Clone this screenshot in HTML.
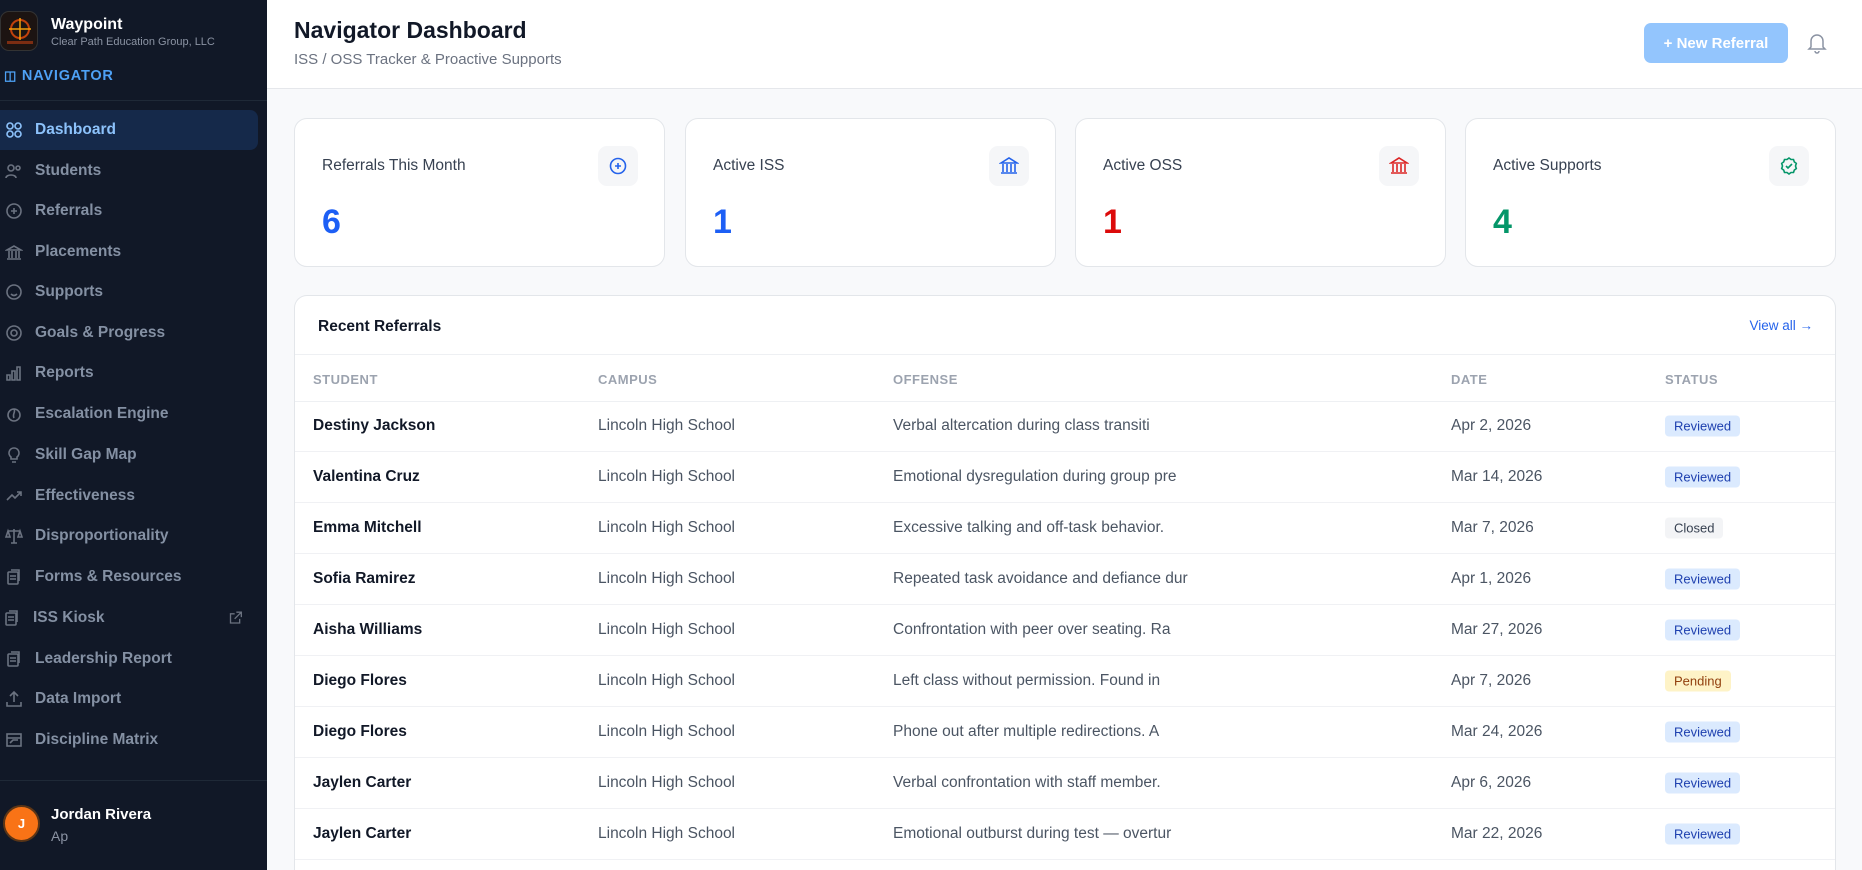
<!DOCTYPE html>
<html><head><meta charset="utf-8"><style>
*{box-sizing:border-box;margin:0;padding:0}
html,body{width:1862px;height:870px;overflow:hidden}
body{font-family:"Liberation Sans",sans-serif;background:#f8f9fb}
#wrap{position:relative;width:1862px;height:870px;overflow:hidden;background:#f8f9fb}
.sb{position:absolute;left:0;top:0;width:267px;height:870px;background:#111827}
.logo{position:absolute;left:0;top:11px;width:38px;height:40px;border-radius:9px;background:#1c1412;border:1px solid #333}
.brand{position:absolute;left:51px;top:16px;color:#fff;font-weight:700;font-size:16px}
.sub{position:absolute;left:51px;top:36px;color:#8b93a3;font-size:11px}
.navh{position:absolute;left:4px;top:68px;color:#4ea1f5;font-weight:700;font-size:14.5px;letter-spacing:.8px}
.div{position:absolute;left:0;width:267px;height:1px;background:#1f2937}
.item{position:absolute;left:0;width:258px;height:40px;display:flex;align-items:center;color:#8490a3;font-size:15.5px;font-weight:600}
.item svg{position:absolute;left:5px;width:18px;height:18px;stroke:#6b7280;fill:none;stroke-width:1.6}
.item span{position:absolute;left:35px}
.item.act{background:#15294a;border-radius:0 8px 8px 0;color:#8cc2fb}
.item.act svg{stroke:#8cc2fb}
.av{position:absolute;left:3px;top:805px;width:37px;height:37px;border-radius:50%;background:#f97316;border:2px solid #5b3516;color:#fff;font-weight:700;font-size:13px;display:flex;align-items:center;justify-content:center}
.hd{position:absolute;left:267px;top:0;width:1595px;height:89px;background:#fff;border-bottom:1px solid #e5e7eb}
.t1{position:absolute;left:27px;top:17px;font-size:23px;font-weight:600;color:#111827}
.t2{position:absolute;left:27px;top:51px;font-size:15px;color:#6b7280}
.btn{position:absolute;left:1377px;top:23px;width:144px;height:40px;border-radius:7px;background:#93c5fd;color:#fff;font-weight:700;font-size:15px;display:flex;align-items:center;justify-content:center}
.card{position:absolute;top:118px;width:371px;height:149px;background:#fff;border:1px solid #e3e6ea;border-radius:13px}
.card .l{position:absolute;left:27px;top:38px;font-size:15.5px;color:#374151}
.card .n{position:absolute;left:27px;top:84px;font-size:34px;font-weight:700}
.card .ib{position:absolute;left:303px;top:27px;width:40px;height:40px;border-radius:9px;background:#f5f6f8;display:flex;align-items:center;justify-content:center}
.card svg{width:20px;height:20px;fill:none;stroke-width:1.6}
.tb{position:absolute;left:294px;top:295px;width:1542px;height:575px;background:#fff;border:1px solid #e3e6ea;border-bottom:none;border-radius:13px 13px 0 0;overflow:hidden}
.th{position:absolute;left:23px;top:22px;font-size:15.5px;font-weight:600;color:#111827}
.va{position:absolute;right:22px;top:22px;font-size:13.5px;color:#2563eb}
.hl{position:absolute;left:0;right:0;height:1px;background:#eef0f3}
.ch{position:absolute;top:76px;font-size:13px;font-weight:600;color:#9ca3af;letter-spacing:.5px}
.row{position:absolute;left:0;right:0;height:51px;border-bottom:1px solid #f0f1f4;font-size:15.5px;color:#4b5563}
.row div{position:absolute;top:50%;transform:translateY(-50%);white-space:nowrap}
.c1{left:18px;color:#111827;font-weight:700}.c2{left:303px}.c3{left:598px}.c4{left:1156px}
.bd{left:1370px;padding:3px 9px;border-radius:4px;font-size:13px}
.rv{background:#dbeafe;color:#1e40af}.cl{background:#f3f4f6;color:#374151}.pd{background:#fef3c7;color:#92400e}
</style></head><body><div id="wrap">
<div class="sb">
<div class="logo"><svg width="38" height="40" viewBox="0 0 38 40"><circle cx="19" cy="17" r="9" fill="none" stroke="#c2410c" stroke-width="2"/><path d="M19 6v22M8 17h22" stroke="#f59e0b" stroke-width="1.5"/><rect x="6" y="29" width="26" height="3" fill="#7c2d12"/></svg></div>
<div class="brand">Waypoint</div><div class="sub">Clear Path Education Group, LLC</div>
<div class="navh"><span style="font-size:13px">◫</span> NAVIGATOR</div>
<div class="div" style="top:100px"></div>
<div class="item act" style="top:110px"><svg viewBox="0 0 18 18"><circle cx="5" cy="5" r="3"/><circle cx="13" cy="5" r="3"/><circle cx="5" cy="13" r="3"/><circle cx="13" cy="13" r="3"/></svg><span>Dashboard</span></div>
<div class="item" style="top:151px"><svg viewBox="0 0 18 18"><circle cx="6" cy="6" r="3"/><path d="M1 16c0-4 10-4 10 0"/><circle cx="13" cy="6" r="2"/></svg><span>Students</span></div>
<div class="item" style="top:191px"><svg viewBox="0 0 18 18"><circle cx="9" cy="9" r="7"/><path d="M9 6v6M6 9h6"/></svg><span>Referrals</span></div>
<div class="item" style="top:232px"><svg viewBox="0 0 18 18"><path d="M2 7l7-4 7 4zM4 8v7M7 8v7M11 8v7M14 8v7M2 16h14"/></svg><span>Placements</span></div>
<div class="item" style="top:272px"><svg viewBox="0 0 18 18"><circle cx="9" cy="9" r="7"/><path d="M6 11c2 2 4 2 6 0"/></svg><span>Supports</span></div>
<div class="item" style="top:313px"><svg viewBox="0 0 18 18"><circle cx="9" cy="9" r="7"/><circle cx="9" cy="9" r="3"/></svg><span>Goals &amp; Progress</span></div>
<div class="item" style="top:353px"><svg viewBox="0 0 18 18"><path d="M2 16V11h3v5zM7 16V7h3v9zM12 16V3h3v13z"/></svg><span>Reports</span></div>
<div class="item" style="top:394px"><svg viewBox="0 0 18 18"><circle cx="9" cy="10" r="6"/><path d="M9 4c2 3-2 5 0 9"/></svg><span>Escalation Engine</span></div>
<div class="item" style="top:435px"><svg viewBox="0 0 18 18"><path d="M9 2a5 5 0 0 1 3 9v2H6v-2a5 5 0 0 1 3-9zM7 16h4"/></svg><span>Skill Gap Map</span></div>
<div class="item" style="top:476px"><svg viewBox="0 0 18 18"><path d="M2 13l5-5 3 3 6-6M12 5h4v4"/></svg><span>Effectiveness</span></div>
<div class="item" style="top:516px"><svg viewBox="0 0 18 18"><path d="M9 2v14M3 4h12M3 4l-2 6h4zM15 4l-2 6h4zM6 16h6"/></svg><span>Disproportionality</span></div>
<div class="item" style="top:557px"><svg viewBox="0 0 18 18"><rect x="3" y="4" width="10" height="12" rx="1"/><path d="M6 2h8v11M5 8h6M5 11h6"/></svg><span>Forms &amp; Resources</span></div>
<div class="item" style="top:598px"><svg viewBox="0 0 18 18" style="left:3px"><rect x="3" y="4" width="10" height="12" rx="1"/><path d="M6 2h8v11M5 8h6M5 11h6"/></svg><span style="left:33px">ISS Kiosk</span><svg viewBox="0 0 18 18" style="left:228px;width:15px"><path d="M8 4H3v11h11v-5M10 2h6v6M16 2L8 10"/></svg></div>
<div class="item" style="top:639px"><svg viewBox="0 0 18 18"><rect x="3" y="4" width="10" height="12" rx="1"/><path d="M6 2h8v11M5 8h6M5 11h6"/></svg><span>Leadership Report</span></div>
<div class="item" style="top:679px"><svg viewBox="0 0 18 18"><path d="M9 12V2M5 6l4-4 4 4M2 12v4h14v-4"/></svg><span>Data Import</span></div>
<div class="item" style="top:720px"><svg viewBox="0 0 18 18"><rect x="2" y="3" width="14" height="12"/><path d="M2 7h14M5 12l3-3h5"/></svg><span>Discipline Matrix</span></div>
<div class="div" style="top:780px"></div>
<div class="av">J</div>
<div style="position:absolute;left:51px;top:806px;color:#fff;font-weight:700;font-size:15px">Jordan Rivera</div>
<div style="position:absolute;left:51px;top:828px;color:#8b93a3;font-size:14px">Ap</div>
</div>
<div class="hd"><div class="t1">Navigator Dashboard</div><div class="t2">ISS / OSS Tracker &amp; Proactive Supports</div>
<div class="btn">+ New Referral</div>
<svg style="position:absolute;left:1540px;top:32px" width="20" height="22" viewBox="0 0 20 22" fill="none" stroke="#8b93a3" stroke-width="1.5"><path d="M4 15V9a6 6 0 0 1 12 0v6l2 2H2zM8 19a2 2 0 0 0 4 0"/></svg></div>
<div class="card" style="left:294px"><div class="l">Referrals This Month</div><div class="n" style="color:#1d5ff5">6</div><div class="ib"><svg viewBox="0 0 20 20" stroke="#2563eb"><circle cx="10" cy="10" r="7.5"/><path d="M10 7v6M7 10h6"/></svg></div></div>
<div class="card" style="left:685px"><div class="l">Active ISS</div><div class="n" style="color:#1d5ff5">1</div><div class="ib"><svg viewBox="0 0 20 20" stroke="#2563eb"><path d="M2 7l8-5 8 5zM4 8v8M8 8v8M12 8v8M16 8v8M2 17h16"/></svg></div></div>
<div class="card" style="left:1075px"><div class="l">Active OSS</div><div class="n" style="color:#dc0a0a">1</div><div class="ib"><svg viewBox="0 0 20 20" stroke="#dc2626"><path d="M2 7l8-5 8 5zM4 8v8M8 8v8M12 8v8M16 8v8M2 17h16"/></svg></div></div>
<div class="card" style="left:1465px"><div class="l">Active Supports</div><div class="n" style="color:#059669">4</div><div class="ib"><svg viewBox="0 0 20 20" stroke="#059669"><path d="M10 2l2 1.5 2.5 0 .8 2.4 2 1.5-.8 2.6.8 2.6-2 1.5-.8 2.4-2.5 0L10 18l-2-1.5-2.5 0-.8-2.4-2-1.5.8-2.6-.8-2.6 2-1.5.8-2.4 2.5 0z"/><path d="M7 10l2 2 4-4"/></svg></div></div>
<div class="tb">
<div class="th">Recent Referrals</div><div class="va">View all →</div>
<div class="hl" style="top:58px"></div>
<div class="ch" style="left:18px">STUDENT</div><div class="ch" style="left:303px">CAMPUS</div><div class="ch" style="left:598px">OFFENSE</div><div class="ch" style="left:1156px">DATE</div><div class="ch" style="left:1370px">STATUS</div>
<div class="hl" style="top:105px"></div>
<div class="row" style="top:105px"><div class="c1">Destiny Jackson</div><div class="c2">Lincoln High School</div><div class="c3">Verbal altercation during class transiti</div><div class="c4">Apr 2, 2026</div><div class="bd rv">Reviewed</div></div>
<div class="row" style="top:156px"><div class="c1">Valentina Cruz</div><div class="c2">Lincoln High School</div><div class="c3">Emotional dysregulation during group pre</div><div class="c4">Mar 14, 2026</div><div class="bd rv">Reviewed</div></div>
<div class="row" style="top:207px"><div class="c1">Emma Mitchell</div><div class="c2">Lincoln High School</div><div class="c3">Excessive talking and off-task behavior.</div><div class="c4">Mar 7, 2026</div><div class="bd cl">Closed</div></div>
<div class="row" style="top:258px"><div class="c1">Sofia Ramirez</div><div class="c2">Lincoln High School</div><div class="c3">Repeated task avoidance and defiance dur</div><div class="c4">Apr 1, 2026</div><div class="bd rv">Reviewed</div></div>
<div class="row" style="top:309px"><div class="c1">Aisha Williams</div><div class="c2">Lincoln High School</div><div class="c3">Confrontation with peer over seating. Ra</div><div class="c4">Mar 27, 2026</div><div class="bd rv">Reviewed</div></div>
<div class="row" style="top:360px"><div class="c1">Diego Flores</div><div class="c2">Lincoln High School</div><div class="c3">Left class without permission. Found in</div><div class="c4">Apr 7, 2026</div><div class="bd pd">Pending</div></div>
<div class="row" style="top:411px"><div class="c1">Diego Flores</div><div class="c2">Lincoln High School</div><div class="c3">Phone out after multiple redirections. A</div><div class="c4">Mar 24, 2026</div><div class="bd rv">Reviewed</div></div>
<div class="row" style="top:462px"><div class="c1">Jaylen Carter</div><div class="c2">Lincoln High School</div><div class="c3">Verbal confrontation with staff member.</div><div class="c4">Apr 6, 2026</div><div class="bd rv">Reviewed</div></div>
<div class="row" style="top:513px"><div class="c1">Jaylen Carter</div><div class="c2">Lincoln High School</div><div class="c3">Emotional outburst during test — overtur</div><div class="c4">Mar 22, 2026</div><div class="bd rv">Reviewed</div></div>
</div>
</div></body></html>
